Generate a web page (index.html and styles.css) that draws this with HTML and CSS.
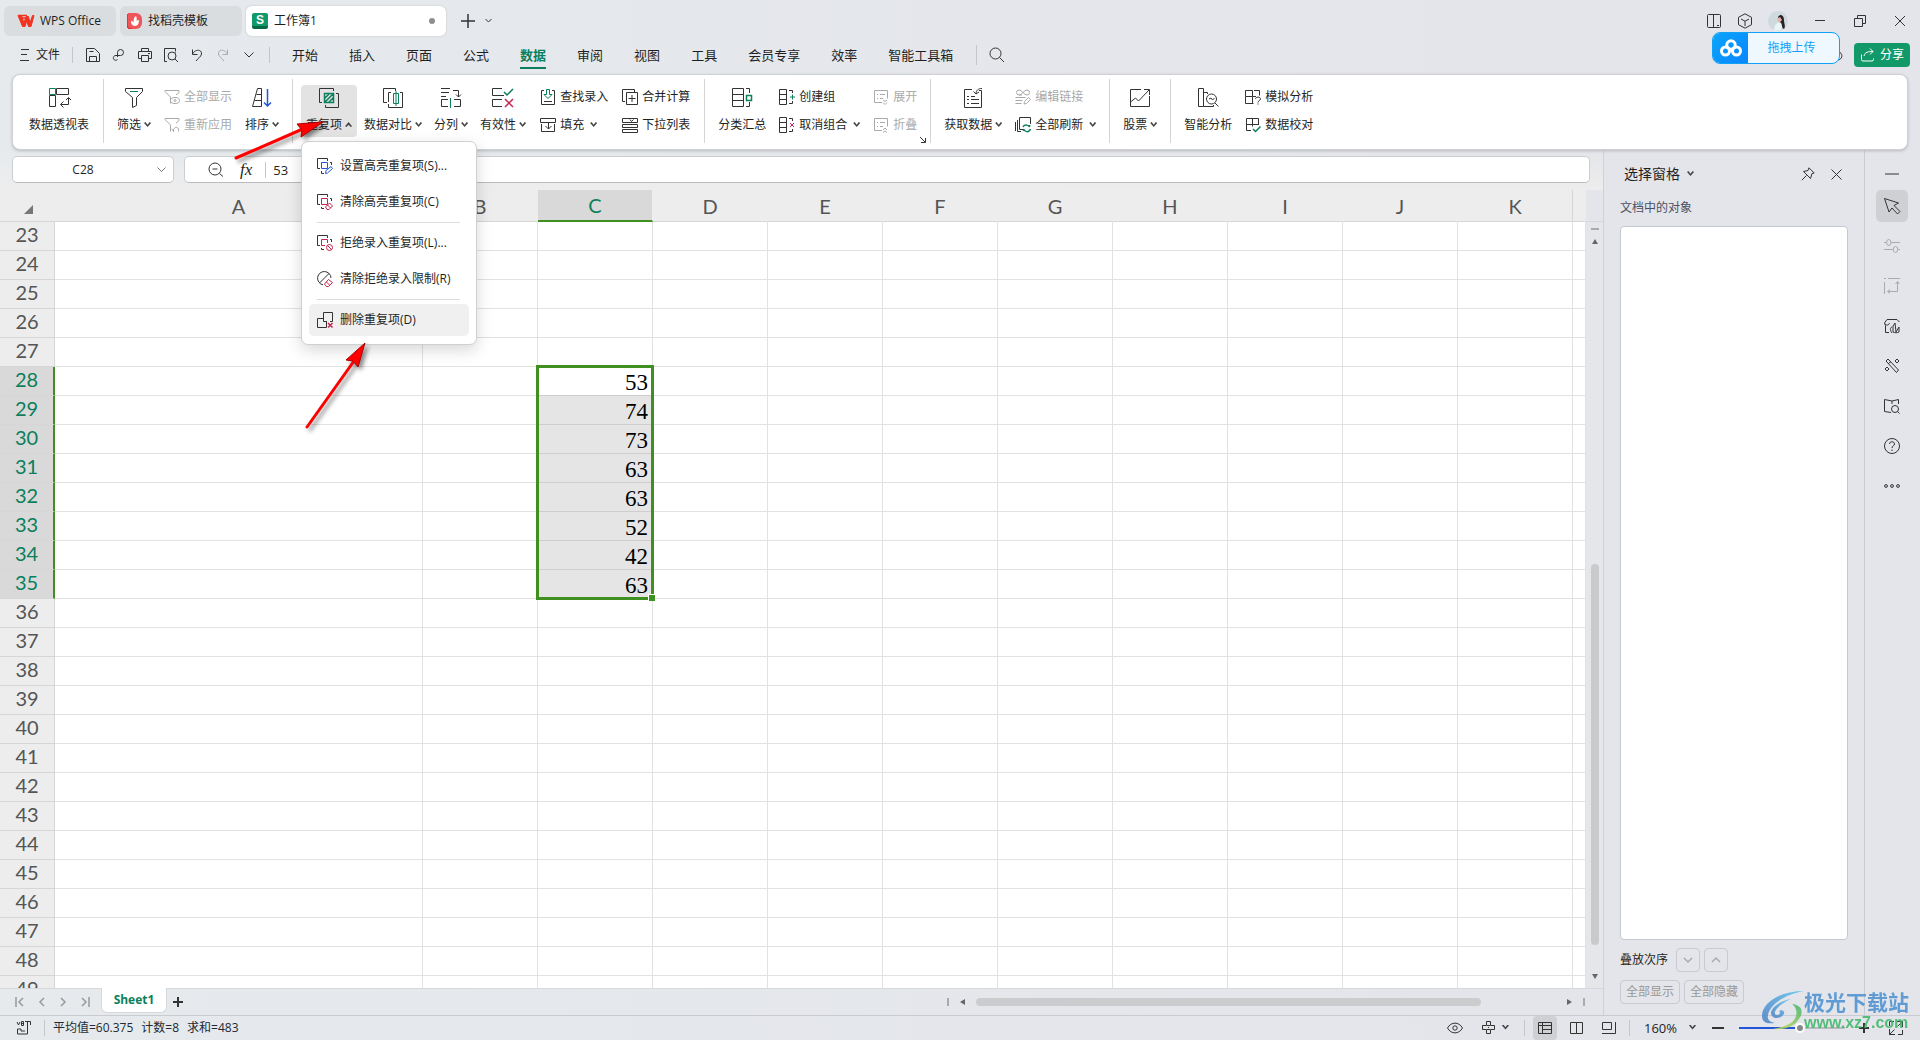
FILE: index.html
```html
<!DOCTYPE html>
<html lang="zh-CN">
<head>
<meta charset="utf-8">
<title>工作簿1 - WPS Office</title>
<link rel="stylesheet" href="styles.css">
</head>
<body>
<header class="titlebar">
  <button class="doc-tab home"><svg class="ic" width="18" height="14" viewBox="0 0 18 14"><path d="M1 1.500h3.500L7 9l2-6.500h2.500L13 9l2.500-7.500H17L14 12.500h-2.500L9.700 7 8 12.500H5.500z" fill="#f2321f" stroke="#f2321f"/><path d="M1 1.500h9M4 4h5" stroke="#f2321f" stroke-width="1.500"/></svg>WPS Office</button>
  <button class="doc-tab template"><svg class="ic" width="16" height="16" viewBox="0 0 16 16"><path d="M1 0h8a6 6 0 0 1 6 6v4a6 6 0 0 1-6 6H1z" fill="#f0555a" stroke="none"/><path d="M0 1h1v14H0zM1 14l5 2H1z" fill="#d8383f" stroke="none"/><path d="M8 13c-3 0-4-3-4-5 2 0 3 1 3 2C6 7 7 4 9 3c1 2 1 4 0 7 0-2 1-3 3-3 0 3-1 6-4 6z" fill="#fff" stroke="none"/></svg>找稻壳模板</button>
  <button class="doc-tab active"><span class="s-logo">S</span><span>工作簿1</span><i class="dot"></i></button>
  <button class="plain new-tab" aria-label="新建"><svg class="ic" width="14" height="14" viewBox="0 0 14 14"><path d="M7 0v14M0 7h14" stroke-width="1.500"/></svg></button>
  <button class="plain" aria-label="标签列表"><svg class="ic" width="7" height="5" viewBox="0 0 7 5"><path d="M.5 1l3 3 3-3"/></svg></button>
  <div class="window-tools">
    <button class="plain" aria-label="布局"><svg class="ic" width="16" height="16" viewBox="0 0 16 16"><rect x="1.500" y="1.500" width="13" height="13" rx="1"/><path d="M7.500 1.500v13M11 12.500h2"/></svg></button>
    <button class="plain" aria-label="应用"><svg class="ic" width="16" height="16" viewBox="0 0 16 16"><path d="M8 .8l6.500 3.500v7.400L8 15.200 1.500 11.700V4.300zM4 6l4 2.200L12 6M8 8.200V13"/></svg></button>
    <button class="plain" aria-label="账号"><svg width="20" height="20" viewBox="0 0 20 20"><circle cx="10" cy="10" r="10" fill="#cfdadf"/><path d="M7 20c-2-3 0-7 4-9l3 3-1 5z" fill="#e9f4f6"/><path d="M10 6c3-4 6-1 6 3s2 6 0 9c-3-1-1-5-4-7z" fill="#2b2229"/><path d="M9 8l3-2 2 3-3 3z" fill="#e6b8ab"/></svg></button>
    <button class="plain" aria-label="最小化"><svg class="ic" width="10" height="12" viewBox="0 0 10 12"><path d="M0 5.500h10"/></svg></button>
    <button class="plain" aria-label="还原"><svg class="ic" width="12" height="12" viewBox="0 0 12 12"><path d="M.5 3.500h8v8h-8zM3.500 3.500v-3h8v8h-3"/></svg></button>
    <button class="plain" aria-label="关闭"><svg class="ic" width="10" height="10" viewBox="0 0 10 10"><path d="M0 0l10 10M10 0L0 10"/></svg></button>
  </div>
</header>

<nav class="menubar">
  <button class="plain file"><svg class="ic" width="10" height="12" viewBox="0 0 10 12"><path d="M1 .5h8M1 5.500h6M0 11.500h9"/></svg>文件</button>
  <div class="quick">
    <button class="plain" aria-label="保存"><svg class="ic" width="16" height="16" viewBox="0 0 16 16"><path d="M1.500 14.500V1.500h8l5 5v8zM4.500 14V9.500h7V14M4.500 4.500h4"/></svg></button>
    <button class="plain" aria-label="输出"><svg class="ic" width="14" height="14" viewBox="0 0 14 14"><path d="M5.500 9V4.500a3 3 0 1 1 3 3H4a2.400 2.400 0 1 0 1.500 4"/></svg></button>
    <button class="plain" aria-label="打印"><svg class="ic" width="16" height="16" viewBox="0 0 16 16"><path d="M4.500 4.500v-3h7v3M4.500 11.500h-3v-7h13v7h-3M4.500 8.500h7v6h-7zM11 6.500h2"/></svg></button>
    <button class="plain" aria-label="打印预览"><svg class="ic" width="16" height="16" viewBox="0 0 16 16"><path d="M4 14.500H1.500V1.500h11V4"/><circle cx="9" cy="9" r="4"/><path d="M12 12l3 3M12.500 4.500v1"/></svg></button>
    <button class="plain" aria-label="撤销"><svg class="ic" width="14" height="14" viewBox="0 0 14 14"><path d="M2.500 1.500v5h5M2.500 6C5 1 12 1 11.500 6 11 9 8 10 6 13"/></svg></button>
    <button class="plain faded" aria-label="恢复"><svg class="ic" width="14" height="14" viewBox="0 0 14 14"><path d="M11.500 1.500v5h-5M11.500 6C9 1 2 1 2.500 6 3 9 6 10 8 13"/></svg></button>
    <button class="plain" aria-label="更多"><svg class="ic" width="10" height="6" viewBox="0 0 10 6"><path d="M.5.500L5 5 9.500.500"/></svg></button>
  </div>
  <div class="tabs">
    <button>开始</button><button>插入</button><button>页面</button><button>公式</button><button class="on">数据</button><button>审阅</button><button>视图</button><button>工具</button><button>会员专享</button><button>效率</button><button>智能工具箱</button>
  </div>
  <button class="plain search" aria-label="搜索"><svg class="ic" width="16" height="16" viewBox="0 0 16 16"><circle cx="6.500" cy="6.500" r="5.500"/><path d="M10.500 10.500L15 15"/></svg></button>
  <button class="share"><svg class="ic" width="15" height="14" viewBox="0 0 15 14"><path d="M1.500 6.500v5q0 1.500 1.500 1.500h9q1.500 0 1.500-1.500v-1M4 8c1-4 4-4.500 9-4.500M10 .5l3 3-3 3"/></svg>分享</button>
  <svg class="ic cloud" width="8" height="12" viewBox="0 0 8 12"><path d="M2 2c6-1 7 8 0 8"/></svg>
  <button class="upload"><span class="upload-logo"><svg width="22" height="18" viewBox="0 0 22 18" fill="none" stroke="#fff" stroke-width="3"><circle cx="11" cy="6" r="4.200"/><circle cx="5.500" cy="12" r="4"/><circle cx="16.500" cy="12" r="4"/></svg></span><span class="upload-text">拖拽上传</span></button>
</nav>

<section class="ribbon">
  <div class="group first">
    <button class="big"><svg class="ic" width="22" height="22" viewBox="0 0 22 22"><path d="M8.500 1.500h12v6h-12zM1.500 8.500h6v11h-6zM13 17.500h7.500V11M15.500 14.500l-3 3 3 3M18 13l2.500-2.500L23 13"/><path class="g" d="M1.500 1.500h6v6h-6z"/></svg><span>数据透视表</span></button>
  </div>
  <div class="group">
    <button class="big"><svg class="ic" width="22" height="22" viewBox="0 0 22 22"><path d="M2.500 1.500h17v3l-6 6v8l-4 2v-10l-7-6z"/><path class="g" d="M7 4.500h8"/></svg><span>筛选<b class="car"></b></span></button>
    <div class="col">
      <button class="small faded"><svg class="ic" width="16" height="16" viewBox="0 0 16 16"><path d="M6.500 14.500V8L1 2.500v-1h14v2L12 6"/><ellipse cx="11" cy="11.500" rx="4.500" ry="3"/><circle cx="11" cy="11.500" r="1"/></svg>全部显示</button>
      <button class="small faded"><svg class="ic" width="16" height="16" viewBox="0 0 16 16"><path d="M6.500 14.500V8L1 2.500v-1h14v2L12 6M9.500 15v-3M9.500 12.500c2-4 6-2 5 2M7.500 12l2 1.500"/></svg>重新应用</button>
    </div>
    <button class="big"><svg class="ic" width="22" height="22" viewBox="0 0 22 22"><path d="M1.500 19.500l5-18h4v18zM5.500 7.500h5M3.500 13.500h7"/><path class="b" d="M16.500 2v17M13 15.500l3.500 3.500 3.500-3.500" stroke-width="1.500"/></svg><span>排序<b class="car"></b></span></button>
  </div>
  <div class="group tight">
    <div class="menu-anchor">
      <button class="big pressed" aria-expanded="true"><svg class="ic" width="22" height="22" viewBox="0 0 22 22"><path d="M4 15.500H1.500v-14h14V4M7.500 18v2.500h13v-14H18"/><path class="g" d="M6.500 6.500h9v9h-9zM7 11l4-4M7 15l8-8M11 15l4-4" stroke-width="1.500"/></svg><span>重复项<b class="car up"></b></span></button>
      <div class="menu" role="menu">
        <button role="menuitem"><svg class="ic" width="16" height="16" viewBox="0 0 16 16"><path d="M3 10.500H.5v-10h10V3M4.500 13v2.500H7M13 4.500h1.500V7"/><path class="b" d="M4.500 4.500h6v6h-6zM8.500 15.500l.5-3 5-4 1.500 2-5 4.500z"/></svg>设置高亮重复项(S)...</button>
        <button role="menuitem"><svg class="ic" width="16" height="16" viewBox="0 0 16 16"><path d="M3 10.500H.5v-10h10V3M4.500 13v1.500H7M13 4.500h1.500V7"/><path class="r" d="M4.500 4.500h6v6h-6zM8.500 13l4-4 3 3-3.500 3.500h-2zM10.500 11l3 3"/></svg>清除高亮重复项(C)</button>
        <hr>
        <button role="menuitem"><svg class="ic" width="16" height="16" viewBox="0 0 16 16"><path d="M3 10.500H.5v-10h10V3M4.500 13v1.500H7M13 4.500h1.500V7"/><path class="r" d="M8 10.500H4.500v-6h6V8"/><circle class="r" cx="12.500" cy="12.500" r="3"/><path class="r" d="M10.500 10.500l4 4"/></svg>拒绝录入重复项(L)...</button>
        <button role="menuitem"><svg class="ic" width="16" height="16" viewBox="0 0 16 16"><path d="M6 13.800A6.700 6.700 0 1 1 14 7M2.500 12L12 2.500"/><path class="r" d="M7.500 13l4-4.500 4 3-4 4h-2zM9.500 11l3 3"/></svg>清除拒绝录入限制(R)</button>
        <hr>
        <button role="menuitem" class="hover"><svg class="ic" width="16" height="16" viewBox="0 0 16 16"><path d="M10 9.500H6.500v-9h9v9H13M6.500 6.500h-6v9h9v-6"/><path class="r" d="M11 11l4.500 4.500M15.500 11L11 15.500" stroke-width="1.500"/></svg>删除重复项(D)</button>
      </div>
    </div>
    <button class="big"><svg class="ic" width="22" height="22" viewBox="0 0 22 22"><path d="M5 15.500H1.500v-14h12V4M6.500 17v3.500h14v-15H18M9 5.500H6.500V15"/><path class="g" d="M11.500 6.500h5v10h-5zM14 4v15"/></svg><span>数据对比<b class="car"></b></span></button>
    <button class="big"><svg class="ic" width="22" height="22" viewBox="0 0 22 22"><path d="M1 1.500h9M1 5.500h8M1 9.500h5M13 3.500h5.500V10M16 7.500l2.500 2.500L21 7.500M8 12.500H1.500v7H8M14 12.500h6.500v7H14"/><path class="g" d="M10.500 11v10"/></svg><span>分列<b class="car"></b></span></button>
    <button class="big"><svg class="ic" width="22" height="22" viewBox="0 0 22 22"><path d="M10 1.500H.5v7H12M10 12.500H.5v7H10"/><path class="g" d="M12 5l3 3 6-6" stroke-width="1.500"/><path class="r" d="M13 12l8 8M21 12l-8 8" stroke-width="1.500"/></svg><span>有效性<b class="car"></b></span></button>
    <div class="col">
      <button class="small"><svg class="ic" width="16" height="16" viewBox="0 0 16 16"><path d="M4 1.500H1.500v14h13v-14H12M4 12.500h8"/><path class="g" d="M6.500.500h3v5H12L8 9.500 4 5.500h2.500z"/></svg>查找录入</button>
      <button class="small"><svg class="ic" width="16" height="16" viewBox="0 0 16 16"><path d="M.5 1.500h15v4H.5zM1.500 7v7.500h13V7M8.500 6v6M5.500 9l3 3 3-3"/></svg>填充<b class="car wide"></b></button>
    </div>
    <div class="col">
      <button class="small"><svg class="ic" width="16" height="16" viewBox="0 0 16 16"><path d="M3 12.500H.5v-12h12V3M4.500 3.500h11v12h-11zM10 6v7M6.500 9.500h7"/></svg>合并计算</button>
      <button class="small"><svg class="ic" width="16" height="16" viewBox="0 0 16 16"><path d="M.5 1.500h15v4H.5zM.5 7.500h15v3H.5zM.5 12.500h15v3H.5zM8 2.500l1.500 2 2-2"/></svg>下拉列表</button>
    </div>
  </div>
  <div class="group">
    <button class="big"><svg class="ic" width="22" height="22" viewBox="0 0 22 22"><path d="M1.500 1.500h11v18h-11zM1.500 7.500h11M1.500 13.500h11M15 1.500h3.500V6M15 19.500h3.500V15"/><path class="g" d="M15.500 8.500h5v5h-5z" stroke-width="1.500"/></svg><span>分类汇总</span></button>
    <div class="col">
      <button class="small"><svg class="ic" width="16" height="16" viewBox="0 0 16 16"><path d="M.5.500h7v15h-7zM.5 5.500h7M.5 10.500h7M10 1.500h3.500V4M10 14.500h3.500V12"/><path class="g" d="M11 8h5M13.500 5.500v5"/></svg>创建组</button>
      <button class="small"><svg class="ic" width="16" height="16" viewBox="0 0 16 16"><path d="M.5.500h7v15h-7zM.5 5.500h7M.5 10.500h7M10 1.500h3.500V4M10 14.500h3.500V12"/><path class="r" d="M11 6l4 4M15 6l-4 4"/></svg>取消组合<b class="car wide"></b></button>
    </div>
    <div class="col">
      <button class="small faded"><svg class="ic" width="16" height="16" viewBox="0 0 16 16"><path d="M9 13.500H1.500v-12h13v8M4 5.500h1M7 5.500h5M4 9.500h1M7 9.500h3M10 11l2 1.500 2-1.500M10 13.500l2 2 2-2"/></svg>展开</button>
      <button class="small faded"><svg class="ic" width="16" height="16" viewBox="0 0 16 16"><path d="M9 13.500H1.500v-12h13v8M4 5.500h1M7 5.500h5M4 9.500h1M7 9.500h3M10 13l2-2 2 2M10 15.500l2-1.500 2 1.500"/></svg>折叠</button>
    </div>
    <button class="plain launcher" aria-label="更多选项"><svg class="ic" width="6" height="6" viewBox="0 0 6 6"><path d="M0 0l5 5M5.500 1v4.500H1"/></svg></button>
  </div>
  <div class="group">
    <button class="big"><svg class="ic" width="22" height="22" viewBox="0 0 22 22"><path d="M10 2.500H2.500v18h17v-17H17M5 9.500h2M9 9.500h4M5 12.500h2M9 12.500h8M5 16.500h2M9 16.500h8M20 1.500c-4 0-6 2-6 5.500M11.500 4.500L14 7l3-2"/></svg><span>获取数据<b class="car"></b></span></button>
    <div class="col">
      <button class="small faded"><svg class="ic" width="16" height="16" viewBox="0 0 16 16"><path d="M7 6H4a2.500 2.500 0 0 1 0-5q2 0 4 2.500T12 6a2.500 2.500 0 0 0 0-5Q10 1 8 3.500T4 6M.5 8.500h10M.5 11.500h7M.5 14.500h6M9 15l.5-2.500 4-4 2 2-4 4z"/></svg>编辑链接</button>
      <button class="small"><svg class="ic" width="16" height="16" viewBox="0 0 16 16"><path d="M8 12.500H4.500v-12h11V7M2.500 3v11.500H6M.5 5v9"/><path class="g" d="M8 10c1.500-3 6-2 6.500 0V8M15.500 12c-1.500 4-6 3-7 0v2" stroke-width="1.500"/></svg>全部刷新<b class="car wide"></b></button>
    </div>
  </div>
  <div class="group">
    <button class="big"><svg class="ic" width="22" height="22" viewBox="0 0 22 22"><path d="M12 2.500H1.500v17h19V9M1.500 15l5-4 3 3L20 3M15 2.500h5.500V8"/></svg><span>股票<b class="car"></b></span></button>
  </div>
  <div class="group last">
    <button class="big"><svg class="ic" width="22" height="22" viewBox="0 0 22 22"><path d="M1.500 1.500h5v18h-5zM6.500 5.500h4V7M6.500 19.500h10V18"/><circle cx="14.500" cy="12" r="5"/><path d="M18 16l3.500 3.500M12 12l2-1 1.500 2 2-2"/></svg><span>智能分析</span></button>
    <div class="col">
      <button class="small"><svg class="ic" width="16" height="16" viewBox="0 0 16 16"><path d="M.5 1.500h7v6h-7zM9 1.500h5.500v5M8 7.500h3M.5 7.500v7h8M7.500 7.500v7M10.500 10c0-2.500 5-2.500 5 0 0 1.500-2.500 1.500-2.500 3.500M13 14.500v1"/></svg>模拟分析</button>
      <button class="small"><svg class="ic" width="16" height="16" viewBox="0 0 16 16"><path d="M6 13.500H1.500v-12h12V8M1.500 7.500h12M7.500 1.500v8"/><path class="g" d="M8 12l2.500 2.500 5-5" stroke-width="1.500"/></svg>数据校对</button>
    </div>
  </div>
</section>

<main class="main">
  <div class="workspace">
    <div class="formula-row">
      <div class="name-box"><input type="text" value="C28" aria-label="名称框"><svg class="ic" width="9" height="6" viewBox="0 0 9 6"><path d="M.5.500l4 4 4-4" stroke="#777"/></svg></div>
      <div class="formula-box">
        <svg class="ic" width="16" height="16" viewBox="0 0 16 16"><circle cx="7" cy="7" r="6"/><path d="M4.500 7h5M11.500 11.500L15 14.500"/></svg>
        <em>fx</em><i class="vr"></i><input type="text" value="53" aria-label="编辑栏">
      </div>
    </div>
    <div class="sheet">
      <div class="grid">
        <table>
          <colgroup><col class="c-head"><col class="c-wide"><col class="c-norm" span="10"><col></colgroup>
          <thead><tr><th class="corner"><svg width="9" height="9" viewBox="0 0 9 9"><path d="M9 0v9H0z" fill="#777"/></svg></th><th>A<th>B<th class="sel">C<th>D<th>E<th>F<th>G<th>H<th>I<th>J<th>K<th></tr></thead>
          <tbody>
          <tr><th>23<td><td><td><td><td><td><td><td><td><td><td><td>
          <tr><th>24<td><td><td><td><td><td><td><td><td><td><td><td>
          <tr><th>25<td><td><td><td><td><td><td><td><td><td><td><td>
          <tr><th>26<td><td><td><td><td><td><td><td><td><td><td><td>
          <tr><th>27<td><td><td><td><td><td><td><td><td><td><td><td>
          <tr class="in first-in"><th>28<td><td><td>53<div class="range"></div><td><td><td><td><td><td><td><td><td>
          <tr class="in"><th>29<td><td><td>74<td><td><td><td><td><td><td><td><td>
          <tr class="in"><th>30<td><td><td>73<td><td><td><td><td><td><td><td><td>
          <tr class="in"><th>31<td><td><td>63<td><td><td><td><td><td><td><td><td>
          <tr class="in"><th>32<td><td><td>63<td><td><td><td><td><td><td><td><td>
          <tr class="in"><th>33<td><td><td>52<td><td><td><td><td><td><td><td><td>
          <tr class="in"><th>34<td><td><td>42<td><td><td><td><td><td><td><td><td>
          <tr class="in"><th>35<td><td><td>63<td><td><td><td><td><td><td><td><td>
          <tr><th>36<td><td><td><td><td><td><td><td><td><td><td><td>
          <tr><th>37<td><td><td><td><td><td><td><td><td><td><td><td>
          <tr><th>38<td><td><td><td><td><td><td><td><td><td><td><td>
          <tr><th>39<td><td><td><td><td><td><td><td><td><td><td><td>
          <tr><th>40<td><td><td><td><td><td><td><td><td><td><td><td>
          <tr><th>41<td><td><td><td><td><td><td><td><td><td><td><td>
          <tr><th>42<td><td><td><td><td><td><td><td><td><td><td><td>
          <tr><th>43<td><td><td><td><td><td><td><td><td><td><td><td>
          <tr><th>44<td><td><td><td><td><td><td><td><td><td><td><td>
          <tr><th>45<td><td><td><td><td><td><td><td><td><td><td><td>
          <tr><th>46<td><td><td><td><td><td><td><td><td><td><td><td>
          <tr><th>47<td><td><td><td><td><td><td><td><td><td><td><td>
          <tr><th>48<td><td><td><td><td><td><td><td><td><td><td><td>
          <tr><th>49<td><td><td><td><td><td><td><td><td><td><td><td>
          </tbody>
        </table>
      </div>
      <div class="vscroll">
        <i class="split"></i>
        <svg width="6" height="5" viewBox="0 0 6 5"><path d="M3 0l3 5H0z" fill="#666"/></svg>
        <div class="vtrack"><i class="vthumb"></i></div>
        <svg width="6" height="5" viewBox="0 0 6 5"><path d="M0 0h6L3 5z" fill="#666"/></svg>
      </div>
    </div>
    <div class="sheet-tabs">
      <div class="sheet-nav">
        <button class="plain" aria-label="第一个"><svg class="ic" width="9" height="10" viewBox="0 0 9 10"><path d="M1 0v10M8 1L4 5l4 4" stroke-width="1.500"/></svg></button>
        <button class="plain" aria-label="上一个"><svg class="ic" width="6" height="10" viewBox="0 0 6 10"><path d="M5 1L1 5l4 4" stroke-width="1.500"/></svg></button>
        <button class="plain" aria-label="下一个"><svg class="ic" width="6" height="10" viewBox="0 0 6 10"><path d="M1 1l4 4-4 4" stroke-width="1.500"/></svg></button>
        <button class="plain" aria-label="最后一个"><svg class="ic" width="9" height="10" viewBox="0 0 9 10"><path d="M8 0v10M1 1l4 4-4 4" stroke-width="1.500"/></svg></button>
      </div>
      <button class="sheet-tab">Sheet1</button>
      <button class="plain" aria-label="新建工作表"><svg class="ic" width="10" height="10" viewBox="0 0 10 10"><path d="M5 0v10M0 5h10" stroke-width="2"/></svg></button>
      <div class="hscroll"><i class="bar"></i><svg width="5" height="6" viewBox="0 0 5 6"><path d="M5 0v6L0 3z" fill="#666"/></svg><div class="htrack"><i class="hthumb"></i></div><svg width="5" height="6" viewBox="0 0 5 6"><path d="M0 0v6l5-3z" fill="#666"/></svg><i class="bar"></i></div>
    </div>
  </div>

  <aside class="panel">
    <div class="panel-head"><h2>选择窗格<b class="car"></b></h2>
      <button class="plain" aria-label="固定"><svg class="ic" width="14" height="14" viewBox="0 0 14 14"><path d="M8 .8L13.200 6l-2.200.5-1.500 5-7-7 4.500-1zM5.500 8.500L.8 13.200"/></svg></button>
      <button class="plain" aria-label="关闭窗格"><svg class="ic" width="11" height="11" viewBox="0 0 11 11"><path d="M.5.500l10 10M10.500.500l-10 10"/></svg></button>
    </div>
    <p class="caption">文档中的对象</p>
    <div class="objects"></div>
    <div class="order"><span>叠放次序</span>
      <button class="box sq" aria-label="下移"><svg class="ic" width="10" height="6" viewBox="0 0 10 6"><path d="M1 1l4 4 4-4" stroke-width="1.500"/></svg></button>
      <button class="box sq" aria-label="上移"><svg class="ic" width="10" height="6" viewBox="0 0 10 6"><path d="M1 5l4-4 4 4" stroke-width="1.500"/></svg></button></div>
    <div class="panel-actions"><button class="box">全部显示</button><button class="box">全部隐藏</button></div>
  </aside>

  <nav class="strip">
    <button class="plain dash" aria-label="收起"><svg class="ic" width="14" height="2" viewBox="0 0 14 2"><path d="M0 1h14" stroke="#8a8b8f" stroke-width="2"/></svg></button>
    <button class="tool on" aria-label="选择"><svg class="ic" width="18" height="18" viewBox="0 0 18 18"><path d="M1.500 1.500l14 4.500-4.500 2.500 6 6-2.500 2.500-5.500-6-3 4z"/></svg></button>
    <button class="tool faded" aria-label="属性"><svg class="ic" width="16" height="16" viewBox="0 0 16 16"><path d="M0 4.500h2.500M7 4.500h9M0 11.500h9M14 11.500h2"/><ellipse cx="4.800" cy="4.500" rx="2.200" ry="3"/><ellipse cx="11.500" cy="11.500" rx="2.200" ry="3"/></svg></button>
    <button class="tool faded" aria-label="分析"><svg class="ic" width="16" height="16" viewBox="0 0 16 16"><path d="M4 .5h12M.5 4v12M0 .5h2M13.500 4v9.500H4M11.500 6l2-2.500 2 2.500M6 11.500l-2.500 2L6 15.500"/></svg></button>
    <button class="tool" aria-label="素材"><svg class="ic" width="16" height="16" viewBox="0 0 16 16"><path d="M5 14.500H1.500v-7L.5 5 3 1.500h10L15.500 4M1 6c2 2 4 1 4.500-1M8 15c-3-4-1-6 0-6M9 14V8l2-3 1 9M12 14l3-5v5c-2 1-4 1-6 0"/></svg></button>
    <button class="tool" aria-label="工具"><svg class="ic" width="16" height="16" viewBox="0 0 16 16"><path d="M2 3l2-2 10.500 11-2 2.500zM4.500 5.500L7 3.500M13 1l2 2-2 2-2-2zM3 9l2 2-2 2-2-2z"/></svg></button>
    <button class="tool" aria-label="查阅"><svg class="ic" width="16" height="16" viewBox="0 0 16 16"><path d="M7 14.500L.5 13.500v-12L8 3l6.500-1.500V6M8 3v3"/><circle cx="11" cy="11" r="3.500"/><path d="M13.500 13.500l2 2"/></svg></button>
    <button class="tool" aria-label="帮助"><svg class="ic" width="16" height="16" viewBox="0 0 16 16"><circle cx="8" cy="8" r="7.500"/><path d="M5.500 6c0-3 5-3 5 0 0 2-2.500 1.500-2.500 4M8 11.500v1.500"/></svg></button>
    <button class="tool" aria-label="更多"><svg class="ic" width="16" height="4" viewBox="0 0 16 4"><circle cx="2" cy="2" r="1.400"/><circle cx="8" cy="2" r="1.400"/><circle cx="14" cy="2" r="1.400"/></svg></button>
  </nav>
</main>

<footer class="status">
  <svg class="ic" width="16" height="14" viewBox="0 0 16 14"><path d="M1 1l1.500 3L4 1M5.500.500v4h2v-4zM5.500 2.500h2M9 .5h5.500V4M11.500.500v12.500H1.500V8H5v2h4"/></svg>
  <i class="vr"></i>
  <div class="stats"><span>平均值=60.375</span><span>计数=8</span><span>求和=483</span></div>
  <div class="views">
    <button class="plain" aria-label="护眼"><svg class="ic" width="16" height="12" viewBox="0 0 16 12"><path d="M.5 6C4-.5 12-.5 15.500 6 12 12.500 4 12.500.5 6z"/><circle cx="8" cy="6" r="2.200"/></svg></button>
    <button class="plain focus" aria-label="阅读模式"><svg class="ic" width="14" height="14" viewBox="0 0 14 14"><path d="M4.500.500h4v4h-4zM4.500 8.500h4v4h-4zM4 4.500H.5v4H4M9 4.500h3.500v4H9M6 6.500h1"/></svg><b class="car wide"></b></button>
    <i class="vr"></i>
    <button class="view on" aria-label="普通视图"><svg class="ic" width="14" height="12" viewBox="0 0 14 12"><path d="M.5.500h13v11H.5zM.5 3.500h13M4.500.500v11M4.500 7.500h9"/></svg></button>
    <button class="view" aria-label="分页预览"><svg class="ic" width="14" height="12" viewBox="0 0 14 12"><path d="M.5.500h12v11H.5zM6.500.500v11"/></svg></button>
    <button class="view" aria-label="页面布局"><svg class="ic" width="14" height="12" viewBox="0 0 14 12"><path d="M.5.500h9v7h-9zM0 11.500h13.500V0"/></svg></button>
    <i class="vr"></i>
  </div>
  <button class="plain zoom-value">160%<b class="car"></b></button>
  <button class="plain" aria-label="缩小"><svg class="ic" width="13" height="10" viewBox="0 0 13 10"><path d="M0 5h12" stroke-width="2"/></svg></button>
  <input class="zoom" type="range" min="0" max="100" value="58" aria-label="缩放">
  <button class="plain" aria-label="放大"><svg class="ic" width="10" height="10" viewBox="0 0 10 10"><path d="M5 0v10M0 5h10" stroke-width="2"/></svg></button>
  <button class="plain full" aria-label="全屏"><svg class="ic" width="14" height="14" viewBox="0 0 14 14"><path d="M8 .5h5.500V6M.5 8v5.500H6M.5 5V.5H5M13.500 9v4.500H9M8.500 5.500l5-5M5.500 8.500l-5 5"/></svg></button>
</footer>

<div class="watermark">
  <svg width="46" height="42" viewBox="0 0 46 42"><defs><linearGradient id="wa" x1="0" y1="1" x2="1" y2="0"><stop offset="0" stop-color="#4b7fc4"/><stop offset="1" stop-color="#5cc4ee"/></linearGradient><linearGradient id="wb" x1="0" y1="1" x2="1" y2="0"><stop offset="0" stop-color="#d6e04a"/><stop offset="1" stop-color="#3cb371"/></linearGradient></defs><path d="M43 1C20 1 1 12 1 26c0 7 6 8 13 7-6-1-8-4-7-8C9 14 25 4 43 1z" fill="url(#wa)"/><path d="M30 9c-12 2-20 9-20 14 0 6 9 7 13 1 1-3-2-5-5-3 2 1 1 4-2 4-5 0-2-9 14-16z" fill="url(#wa)"/><path d="M31 14c10 1 12 8 7 15-5 8-15 11-26 10 10-2 17-4 21-9 4-6 3-12-2-16z" fill="url(#wb)"/></svg>
  <div><strong>极光下载站</strong><span>www.xz7.com</span></div>
</div>
<svg class="arrow arrow-menu" width="110" height="60" viewBox="0 0 110 60"><path d="M5 42L74 12" stroke="#f00" stroke-width="3" stroke-linecap="round"/><path d="M92 6L66 8l5 6-1 7z" fill="#f00" stroke="#a00"/></svg>
<svg class="arrow arrow-item" width="80" height="110" viewBox="0 0 80 110"><path d="M7 87L54 21" stroke="#f00" stroke-width="3" stroke-linecap="round"/><path d="M65 3L46 20l7 1 5 6z" fill="#f00" stroke="#a00"/></svg>
</body>
</html>
```
FILE: styles.css
```css
* { box-sizing: border-box; }
html, body { height: 100%; margin: 0; }
body {
  display: flex;
  flex-direction: column;
  position: relative;
  overflow: hidden;
  background: linear-gradient(90deg, #e6eaed, #e4e5ea 75%);
  color: #1f1f1f;
  font: 12px/16px "Open Sans", "Noto Sans CJK SC", sans-serif;
}
button, input { font: inherit; color: inherit; border: 0; background: none; padding: 0; margin: 0; }
button { display: flex; align-items: center; white-space: nowrap; }
.ic { fill: none; stroke: #333; stroke-width: 1; flex: none; overflow: visible; }
.ic .g { stroke: #0b7f5b; }
.ic .b { stroke: #2456d6; }
.ic .r { stroke: #c5254f; }
.plain { justify-content: center; }
.faded { color: #aaa; }
.faded .ic { stroke: #aaa; }
.car { width: 7px; height: 6px; margin-left: 3px; flex: none; display: inline-block; background: linear-gradient(#444, #444); clip-path: polygon(0 15%, 20% 0, 50% 45%, 80% 0, 100% 15%, 50% 85%); }
.car.up { clip-path: polygon(0 70%, 50% 0, 100% 70%, 80% 85%, 50% 45%, 20% 85%); }
.car.wide { margin-left: 6px; }
.vr { width: 1px; height: 16px; background: #c4c6ca; }

/* title bar */
.titlebar { display: flex; align-items: center; height: 41px; padding: 0 14px 0 4px; gap: 4px; flex: none; }
.doc-tab { height: 30px; border-radius: 6px; background: #d9dde0; padding: 0 13px; gap: 5px; }
.home { width: 112px; }
.template { width: 122px; padding: 0 7px; }
.doc-tab.active { width: 200px; background: #fff; padding: 0 11px 0 6px; gap: 6px; box-shadow: 0 0 2px #b9bdc2; }
.s-logo { width: 16px; height: 16px; border-radius: 2px; background: linear-gradient(#12996a 13px, #056b47 13px); color: #fff; font: bold 12px/15px "Liberation Sans", sans-serif; text-align: center; }
.dot { width: 6px; height: 6px; border-radius: 50%; background: #8e8e8e; margin-left: auto; }
.new-tab { margin: 0 6px 0 11px; }
.window-tools { display: flex; align-items: center; margin-left: auto; gap: 23px; }
.window-tools button:nth-child(-n+2) { margin-right: -8px; }
.window-tools button:nth-child(n+4) { width: 12px; margin-left: 5px; }
.window-tools button:nth-child(4) { margin-left: 3px; }

/* menu bar */
.menubar { display: flex; align-items: center; height: 28px; padding: 0 10px 0 20px; position: relative; flex: none; }
.file { gap: 6px; padding-right: 12px; border-right: 1px solid #c4c6ca; }
.quick { display: flex; align-items: center; padding-left: 7px; padding-right: 7px; border-right: 1px solid #c4c6ca; }
.quick button { width: 26px; height: 16px; }
.tabs { display: flex; gap: 31px; padding: 0 23px 0 22px; border-right: 1px solid #c4c6ca; height: 20px; }
.tabs button { font-size: 13px; height: 28px; margin-top: -4px; border: solid transparent; border-width: 2px 0; }
.tabs .on { color: #0b7f5b; font-weight: bold; border-bottom-color: #0b7f5b; }
.search { margin-left: 12px; }
.share { margin-left: auto; height: 24px; width: 56px; border-radius: 4px; background: #12996a; color: #fff; justify-content: center; gap: 5px; }
.share .ic { stroke: #fff; }
.cloud { position: absolute; right: 77px; top: 9px; }
.upload { position: absolute; right: 80px; top: -9px; width: 128px; height: 32px; border: 1px solid #11a2f8; border-radius: 8px; background: #eff8ff; color: #11a2f8; overflow: hidden; }
.upload-logo { width: 35px; height: 32px; background: linear-gradient(135deg, #0aa5fb, #0a85ff); display: flex; align-items: center; justify-content: center; }
.upload-text { flex: 1; text-align: center; padding-right: 4px; }

/* ribbon */
.ribbon { display: flex; margin: 5px 12px 0; height: 76px; flex: none; padding: 4px 2px 6px; background: #fff; border: 1px solid #cfd1d6; border-radius: 8px; box-shadow: 0 1px 3px #b6b8be; position: relative; z-index: 3; }
.group { display: flex; align-items: center; gap: 13px; padding: 0 13px; border-right: 1px solid #d4d4d4; position: relative; }
.group.first { padding: 0 14px; }
.group.tight { gap: 12px; padding: 0 14px 0 13px; }
.group.tight .col { margin-left: 2px; }
.group.last { border: 0; }
.big { flex-direction: column; height: 52px; padding: 2px 0 4px; gap: 8px; }
.big span { display: flex; align-items: center; }
.pressed { background: #e3e3e3; border-radius: 4px; padding-left: 5px; padding-right: 5px; margin: 0 -5px; }
.col { display: flex; flex-direction: column; gap: 12px; }
.small { gap: 4px; height: 16px; }
.small .car.wide { margin-left: 2px; }
.launcher { position: absolute; right: 4px; bottom: 0; }
.menu-anchor { position: relative; }
.menu { position: absolute; left: -5px; top: 56px; width: 176px; padding: 8px 7px; display: flex; flex-direction: column; gap: 4px; background: #fff; border: 1px solid #d0d0d0; border-radius: 7px; box-shadow: 0 5px 16px rgba(0,0,0,.16); }
.menu button { height: 32px; padding: 0 8px; gap: 7px; border-radius: 5px; }
.menu .hover { background: #f0f0f0; }
.menu hr { width: 143px; height: 1px; border: 0; margin: 0 8px; background: #dcdcdc; }

/* workspace */
.main { display: flex; flex: 1; min-height: 0; }
.workspace { flex: 1; min-width: 0; display: flex; flex-direction: column; }
.formula-row { display: flex; gap: 10px; padding: 6px 13px 6px 12px; height: 40px; background: linear-gradient(transparent, #ededed); flex: none; }
.name-box, .formula-box { display: flex; align-items: center; background: #fff; border: 1px solid #cbcdd1; border-bottom-color: #b9bbbf; border-radius: 5px; height: 27px; }
.name-box { width: 162px; padding-right: 7px; }
.name-box input { flex: 1; min-width: 0; text-align: center; padding-right: 4px; }
.formula-box { flex: 1; padding-left: 23px; }
.formula-box em { font: italic 17px/20px "Liberation Serif", serif; margin: 0 13px 0 16px; }
.formula-box input { flex: 1; margin-left: 7px; font-size: 13px; }
.sheet { flex: 1; min-height: 0; display: flex; border-bottom: 1px solid #d6d8db; }
.grid { flex: 1; overflow: hidden; background: #fff; }
table { table-layout: fixed; width: 100%; border-collapse: separate; border-spacing: 0; }
.c-head { width: 55px; }
.c-wide { width: 368px; }
.c-norm { width: 115px; }
th { font: 20px/28px Lato, sans-serif; color: #555; background: #ededed; padding: 0; border-right: 1px solid #d6d6d6; border-bottom: 1px solid #d6d6d6; }
thead th { height: 32px; }
thead th:not(:nth-child(12)) { border-right-color: #ededed; }
thead .corner { text-align: right; padding: 4px 21px 0 0; line-height: 9px; }
thead .sel { background: #d9d9d9; color: #0b7f5b; border-bottom: 2px solid #409021; }
tbody th { height: 29px; line-height: 24px; vertical-align: top; }
td { height: 29px; border-right: 1px solid #e2e2e2; border-bottom: 1px solid #e2e2e2; padding: 4px 4px 0 0; font: 23px/24px "Liberation Serif", serif; color: #000; text-align: right; }
.in th { background: #d9d9d9; color: #0b7f5b; border-right: 2px solid #409021; }
.in td:nth-child(4) { background: #e5e5e5; border-bottom-color: #cecece; position: relative; }
.first-in td:nth-child(4) { background: #fff; }
.range { position: absolute; z-index: 1; left: -2px; right: -2px; top: -2px; height: 235px; border: 3px solid #409021; }
.range::after { content: ""; position: absolute; right: -4px; bottom: -4px; width: 6px; height: 6px; background: #409021; border: solid #fff; border-width: 1px 0 0 1px; }
.vscroll { width: 17px; margin-top: 31px; display: flex; flex-direction: column; align-items: center; gap: 9px; padding: 6px 0 9px; background: #e5e6ea; border-top: 1px solid #d6d8db; }
.split { width: 8px; height: 2px; background: #aaa; }
.vtrack { flex: 1; display: flex; flex-direction: column; justify-content: flex-end; padding-bottom: 20px; }
.vthumb { width: 8px; height: 55%; border-radius: 4px; background: #c9cacc; }
.sheet-tabs { height: 26px; flex: none; display: flex; align-items: center; padding: 0 18px 0 15px; }
.sheet-nav { display: flex; gap: 15px; width: 86px; }
.sheet-nav .ic { stroke: #999; }
.sheet-tab { align-self: flex-start; height: 25px; margin-top: -1px; width: 66px; justify-content: center; background: #fff; border: 1px solid #d6d8db; border-top: 0; border-radius: 0 0 6px 6px; color: #0b7f5b; font-weight: bold; margin-right: 6px; }
.hscroll { margin-left: auto; display: flex; align-items: center; gap: 11px; width: calc(40% + 10px); }
.bar { width: 2px; height: 8px; background: #aaa; }
.htrack { flex: 1; }
.hthumb { display: block; width: 87%; height: 8px; border-radius: 4px; background: #cbcccd; }

/* side panes */
.panel { width: 261px; border-left: 1px solid #cfd1d6; padding: 13px 16px 11px; display: flex; flex-direction: column; }
.panel-head { display: flex; align-items: center; height: 22px; padding: 0 6px 0 4px; gap: 16px; }
.panel-head h2 { margin: 0; flex: 1; font: 14px/20px "Open Sans", "Noto Sans CJK SC", sans-serif; display: flex; align-items: center; }
.panel-head .car { margin-left: 7px; }
.caption { margin: 15px 0 10px; color: #4b5163; }
.objects { flex: 1; background: #fff; border: 1px solid #c5c9d2; border-radius: 4px; }
.order { display: flex; align-items: center; gap: 4px; margin: 8px 0; }
.order span { margin-right: 4px; }
.box { height: 24px; padding: 0 5px; border: 1px solid #c9cbd0; border-radius: 4px; color: #999; justify-content: center; }
.box .ic { stroke: #aaa; }
.box.sq { width: 24px; }
.panel-actions { display: flex; gap: 4px; }
.strip { width: 56px; border-left: 1px solid #c9cbd0; display: flex; flex-direction: column; align-items: center; gap: 8px; padding: 23px 1px 0 0; }
.dash { height: 2px; margin-bottom: 7px; }
.tool { width: 32px; height: 32px; border-radius: 5px; justify-content: center; }
.tool.on { background: #cfd0d3; }

/* status bar */
.status { height: 25px; flex: none; display: flex; align-items: center; border-top: 1px solid #c9cbcf; padding: 0 17px 1px 16px; }
.status .vr { margin: 0 8px 0 12px; }
.stats { flex: 1; display: flex; gap: 8px; color: #222a35; }
.views { display: flex; align-items: center; }
.focus { margin-left: 19px; }
.views .vr { margin: 0 8px 0 15px; }
.view { width: 24px; height: 24px; border-radius: 4px; justify-content: center; margin-right: 8px; }
.view.on { background: #cfd0d3; }
.views .view + .vr { margin: 0 14px 0 0; }
.zoom-value { font-size: 13px; margin-right: 16px; }
.zoom-value .car { margin-left: 12px; }
.zoom { appearance: none; width: 106px; height: 12px; margin: 0 14px; background: linear-gradient(90deg, #2454d8 58%, #b9bbbf 58%) center / 100% 2px no-repeat; }
.zoom::-webkit-slider-thumb { appearance: none; width: 10px; height: 10px; border-radius: 50%; background: #888; border: 2px solid #fff; }
.full { margin-left: 20px; }

/* overlays */
.arrow { position: absolute; z-index: 5; fill: none; filter: drop-shadow(3px 3px 2px rgba(0,0,0,.45)); pointer-events: none; }
.arrow-menu { left: 231px; top: 116px; }
.arrow-item { left: 300px; top: 340px; }
.watermark { position: absolute; right: 11px; bottom: 8px; display: flex; gap: 0; opacity: .85; pointer-events: none; }
.watermark div { display: flex; flex-direction: column; margin-left: -3px; }
.watermark strong { font-size: 21px; line-height: 24px; color: #4a90d0; }
.watermark span { font: 16px/18px "Liberation Sans", sans-serif; color: #3db768; font-weight: bold; }
```
